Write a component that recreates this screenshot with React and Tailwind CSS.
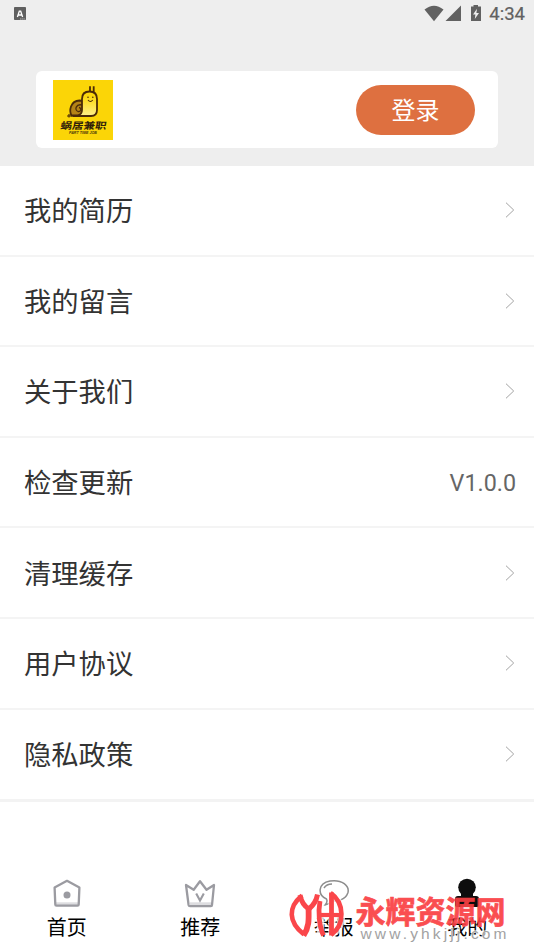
import React from "react";

const rows = ["我的简历", "我的留言", "关于我们", "检查更新", "清理缓存", "用户协议", "隐私政策"];

function StatusBar() {
  return (
    <div className="flex h-7 items-center pl-[14px] pr-[9px] text-[#616161]">
      <svg width="13" height="14" viewBox="0 0 13 14">
        <rect width="12" height="13" rx="0.8" fill="#5f5f5f" />
        <path d="M3.4 10 L5.3 4.2 H6.7 L8.6 10 M4.2 8 H7.8" fill="none" stroke="#fff" strokeWidth="1.3" />
        <path d="M6 12 H11" stroke="#ccc" strokeWidth="0.8" strokeDasharray="1.5 0.6" />
      </svg>
      <svg className="ml-auto" width="60" height="18" viewBox="0 0 60 18" fill="#616161">
        <path d="M0.5 4.4 Q10 -3.2 19.5 4.4 L10 16 Z" transform="translate(0 0.2)" />
        <path d="M37 0.5 V16 H21.5 Z" />
        <path d="M47 1.5 H49.5 V0 H54 V1.5 H57 V16 H47 Z" />
        <path d="M53 3.8 L49 9.4 H51.4 L50.8 14 L55 7.9 H52.4 Z" fill="#eee" />
      </svg>
      <span className="ml-[5px] text-[18.5px] leading-none [-webkit-text-stroke:0.2px_#616161]">4:34</span>
    </div>
  );
}

function Logo() {
  return (
    <div className="h-[60px] w-[60px] bg-[#fbd507]">
      <svg width="60" height="60" viewBox="0 0 60 60">
        <defs>
          <linearGradient id="snail" x1="0" y1="0" x2="0" y2="1">
            <stop offset="0.2" stopColor="#fbd70c" />
            <stop offset="1" stopColor="#fff08a" />
          </linearGradient>
        </defs>
        <path d="M37 12 V6.2 M40.7 12 V6.2" stroke="#4b2b08" strokeWidth="1.8" />
        <path d="M29 35.5 H18.5 C16 31 17 21 26.5 20.5 L30 21" fill="#b58316" stroke="#4b2b08" strokeWidth="1.8" />
        <path d="M29 25 C23 23.5 21 30 25 31.5 C28 32 29 28 26 27.5" fill="none" stroke="#4b2b08" strokeWidth="1.3" />
        <path d="M20 36 H38 Q44 36 44 30 V19 Q44 11.5 36.5 11.5 Q29 11.5 29 19 V30 Q29 34 25 35.5" fill="url(#snail)" stroke="#4b2b08" strokeWidth="1.8" />
        <circle cx="35" cy="17.3" r="0.8" fill="#4b2b08" />
        <circle cx="39.8" cy="17.3" r="0.8" fill="#4b2b08" />
        <path d="M35 20 Q37.5 23 39.7 20" fill="none" stroke="#4b2b08" strokeWidth="1.1" />
        <path d="M14 36 H20 M16 34 V37.5" stroke="#4b2b08" strokeWidth="1.2" />
        <g transform="translate(7 48.6) skewX(-10)">
          <text x="0" y="0" textLength="46" lengthAdjust="spacingAndGlyphs" fontSize="9.4" fontWeight="700" fill="#30200a" fontFamily="Noto Sans CJK SC, sans-serif">蜗居兼职</text>
        </g>
        <text x="16" y="53.5" textLength="28" lengthAdjust="spacingAndGlyphs" fontSize="3.5" fontWeight="700" fontStyle="italic" fill="#4b3508" fontFamily="Liberation Sans, sans-serif">PART TIME JOB</text>
      </svg>
    </div>
  );
}

const icons = {
  home: (
    <g>
      <path d="M4 24.8 H28" stroke="#dddde0" strokeWidth="3" />
      <path d="M16 1.8 L28.4 8.6 L27.7 25.4 Q27.7 26.6 26.5 26.6 H5.5 Q4.3 26.6 4.3 25.4 L3.6 8.6 Z" fill="none" stroke="#9b9ba1" strokeWidth="2.3" strokeLinejoin="round" />
      <circle cx="16" cy="16" r="3.5" fill="#9b9ba1" />
    </g>
  ),
  crown: (
    <g>
      <path d="M6 24.8 H27" stroke="#dddde0" strokeWidth="3" />
      <path d="M2 6 L9.7 10.8 L16 2.2 L22.5 10.8 L30 6 L28 26 Q28 27.1 26.8 27.1 H6 Q4.8 27.1 4.6 26 Z" fill="none" stroke="#9b9ba1" strokeWidth="2.3" strokeLinejoin="round" />
      <path d="M12.2 14.6 L16 21.6 L19.8 14.6" fill="none" stroke="#9b9ba1" strokeWidth="2.1" />
    </g>
  ),
  chat: (
    <g fill="none" stroke="#8d8d8d" strokeWidth="1.5">
      <path d="M7 26 C9 24 9.5 22 8.5 20 C-0.5 16 -0.5 4.5 12 2 C24 0.2 32 7 29.8 14 C27.5 20.5 20 22.5 14 22 Q11 25.5 7 26 Z" />
      <path d="M6 9 Q8.5 5 14 5" />
    </g>
  ),
  user: (
    <g fill="#0d0d0d">
      <ellipse cx="16" cy="9.3" rx="8.8" ry="8.6" />
      <path d="M10 15 H22 V18 H25 Q28 18 28 21 V27 Q28 29 26 29 H6 Q4 29 4 27 V21 Q4 18 7 18 H10 Z" />
    </g>
  ),
};

const tabs = [
  ["首页", "home"],
  ["推荐", "crown"],
  ["举报", "chat"],
  ["我的", "user"],
];

function Watermark() {
  return (
    <div className="absolute left-[288px] top-[888px] h-[60px] w-[232px]">
      <svg className="overflow-visible" width="232" height="60" viewBox="0 0 232 60">
        <g fill="none" stroke="#fff" strokeWidth="7.5" opacity="0.75">
          <path d="M13 7.5 C0 19 0 34 16 46.5 M11 7 L21 22 L30 7 M21 21 C21 34 21 40 16 47" />
          <path d="M32.5 14 V46 M44 5 V47 M43.5 6 C57 17 57 37 43.5 47 M31 27 H53" />
        </g>
        <g fill="none" stroke="#fa464a">
          <path d="M14 7.5 C0 19 0 34 16 46.5" strokeWidth="4.6" />
          <path d="M12 7 Q14 17 21 21 Q28 15 29.5 6.5" strokeWidth="5" />
          <path d="M20.5 19 C21 33 21 39 15.5 47.5" strokeWidth="5.8" />
          <path d="M32 13 C30 24 31 38 35.5 47.5" strokeWidth="4.8" />
          <path d="M43.5 4.5 V47.5" strokeWidth="4.8" />
          <path d="M42.5 5 C57 15 57 37 43 47" strokeWidth="4.6" />
          <path d="M31 27 H53" strokeWidth="4.2" />
        </g>
        <g opacity="0.92">
          <text x="67.5" y="34.8" textLength="150" lengthAdjust="spacingAndGlyphs" fontSize="30.8" fontWeight="700" fill="#fa3f43" stroke="#fa3f43" strokeWidth="0.7" fontFamily="Noto Sans CJK SC, sans-serif">永辉资源网</text>
        </g>
        <text x="72.5" y="51.3" textLength="146" lengthAdjust="spacing" fontSize="15.5" fill="#a2a2a2" stroke="#fff" strokeWidth="1.6" strokeOpacity="0.75" paintOrder="stroke" fontFamily="Liberation Sans, sans-serif">www.yhkjjj.com</text>
      </svg>
    </div>
  );
}

export default function App() {
  return (
    <div className="relative flex h-[950px] w-[534px] flex-col overflow-hidden bg-white font-['Roboto','Noto_Sans_CJK_SC',sans-serif]">
      <header className="h-[166px] shrink-0 bg-[#eeeeee]">
        <StatusBar />
        <div className="mx-9 mt-[43px] flex h-[77px] items-center justify-between rounded-md bg-white pl-[17px] pr-[23px]">
          <Logo />
          <button className="h-[50px] w-[119px] rounded-full bg-[#de7040] pt-px text-2xl leading-[50px] text-white">登录</button>
        </div>
      </header>
      <main className="shrink-0">
        {rows.map((label, i) => (
          <div
            key={label}
            className={`flex items-center justify-between pl-6 text-[#333] ${i === 6 ? "h-[92px] border-b-[3px] border-[#f3f3f3]" : "h-[90.6px] border-b-2 border-[#f4f4f4]"}`}
          >
            <span className="pt-1 text-[27.3px] leading-10">{label}</span>
            {i === 3 ? (
              <span className="pr-[18px] pt-0.5 text-[23.3px] text-[#666]">V1.0.0</span>
            ) : (
              <svg className="mr-[18px]" width="12" height="16" viewBox="0 0 12 16">
                <path d="M2 0.7 L9.7 8 L2 15.3" fill="none" stroke="#a3a3a3" strokeWidth="1" />
              </svg>
            )}
          </div>
        ))}
      </main>
      <nav className="mt-auto grid h-[73px] shrink-0 grid-cols-4">
        {tabs.map(([label, icon]) => (
          <div key={label} className="flex flex-col items-center">
            <svg width="32" height="32" viewBox="0 0 32 32">
              <g transform={icon === "user" ? "translate(0 1)" : "translate(0 2)"}>{icons[icon]}</g>
            </svg>
            <span className="mt-[5px] text-[20px] leading-7 text-black">{label}</span>
          </div>
        ))}
      </nav>
      <Watermark />
    </div>
  );
}
